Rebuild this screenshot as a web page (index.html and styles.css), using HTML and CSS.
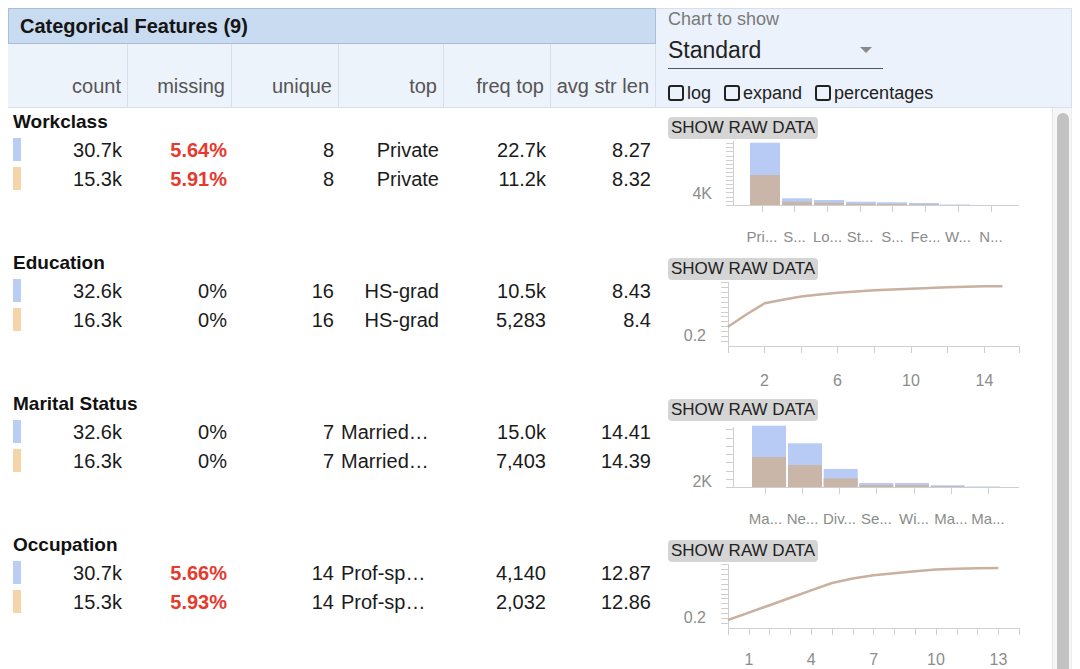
FILE: index.html
```html
<!DOCTYPE html>
<html>
<head>
<meta charset="utf-8">
<link rel="stylesheet" href="styles.css">
</head>
<body>
<div class="app">
  <div class="head">
    <div class="head-left">
      <div class="title">Categorical Features (9)</div>
      <div class="cols">
        <div>count</div><div>missing</div><div>unique</div><div>top</div><div>freq top</div><div>avg str len</div>
      </div>
    </div>
    <div class="controls">
      <div class="ctl-label">Chart to show</div>
      <div class="select"><span>Standard</span><span class="caret"></span></div>
      <div class="checks">
        <label class="check"><span class="cb"></span>log</label>
        <label class="check"><span class="cb"></span>expand</label>
        <label class="check"><span class="cb"></span>percentages</label>
      </div>
    </div>
  </div>

  <div class="main">
    <div class="features">

      <div class="feature">
        <div class="stats">
          <div class="fname">Workclass</div>
          <div class="row"><span class="first"><i class="sw a"></i>30.7k</span><span class="red">5.64%</span><span>8</span><span>Private</span><span>22.7k</span><span>8.27</span></div>
          <div class="row"><span class="first"><i class="sw b"></i>15.3k</span><span class="red">5.91%</span><span>8</span><span>Private</span><span>11.2k</span><span>8.32</span></div>
        </div>
        <div class="chart">
          <button class="raw">SHOW RAW DATA</button>
          <svg viewBox="0 0 396 110">
            <rect class="bl" x="94" y="3.7" width="30" height="62.3"/><rect class="br" x="94" y="36" width="30" height="30"/>
            <rect class="bl" x="126" y="59.3" width="30" height="6.7"/><rect class="br" x="126" y="62.7" width="30" height="3.3"/>
            <rect class="bl" x="158" y="61" width="30" height="5"/><rect class="br" x="158" y="63.7" width="30" height="2.3"/>
            <rect class="bl" x="190" y="62.7" width="30" height="3.3"/><rect class="br" x="190" y="64.7" width="30" height="1.3"/>
            <rect class="bl" x="221" y="63.3" width="30" height="2.7"/><rect class="br" x="221" y="65" width="30" height="1"/>
            <rect class="bl" x="253" y="64" width="30" height="2"/><rect class="br" x="253" y="65.4" width="30" height="0.6"/>
            <rect class="bl" x="284" y="65.5" width="30" height="0.5"/>
            <path class="ax" d="M77.5 2V66.5M70 66.5H363M70 62.5h7M70 58.5h7M70 53.5h7M70 49.5h7M70 45.5h7M70 41.5h7M70 37.5h7M70 33.5h7M70 29.5h7M70 25.5h7M70 21.5h7M70 17.5h7M70 12.5h7M70 8.5h7M70 4.5h7M106.5 66v7M138.5 66v7M171.5 66v7M204.5 66v7M236.5 66v7M269.5 66v7M302.5 66v7M335.5 66v7"/>
            <text class="yl" x="56" y="60">4K</text>
            <g class="xl">
              <text x="106" y="103">Pri...</text><text x="138.5" y="103">S...</text><text x="171.5" y="103">Lo...</text><text x="204" y="103">St...</text>
              <text x="236.5" y="103">S...</text><text x="269.5" y="103">Fe...</text><text x="302" y="103">W...</text><text x="335" y="103">N...</text>
            </g>
          </svg>
        </div>
      </div>

      <div class="feature">
        <div class="stats">
          <div class="fname">Education</div>
          <div class="row"><span class="first"><i class="sw a"></i>32.6k</span><span>0%</span><span>16</span><span>HS-grad</span><span>10.5k</span><span>8.43</span></div>
          <div class="row"><span class="first"><i class="sw b"></i>16.3k</span><span>0%</span><span>16</span><span>HS-grad</span><span>5,283</span><span>8.4</span></div>
        </div>
        <div class="chart">
          <button class="raw">SHOW RAW DATA</button>
          <svg viewBox="0 0 396 110">
            <path class="ax" d="M72.5 2V66.5M72 66.5H363.5M65 61.5h7M65 56.5h7M65 51.5h7M65 46.5h7M65 41.5h7M65 36.5h7M65 32.5h7M65 27.5h7M65 22.5h7M65 17.5h7M65 12.5h7M65 7.5h7M65 2.5h7M72.5 66v7M108.5 66v7M145.5 66v7M181.5 66v7M218.5 66v7M255.5 66v7M291.5 66v7M328.5 66v7M363.5 66v7"/>
            <polyline class="ln" points="72,46.7 90.3,34.5 108.6,23.3 126.9,19.8 145.2,16.6 163.5,14.5 181.8,12.7 200.1,11.4 218.4,10.3 236.7,9.5 255,8.7 273.3,8 291.6,7.3 309.9,6.8 328.2,6.3 346.5,6.2"/>
            <text class="yl" x="50" y="61">0.2</text>
            <g class="nl">
              <text x="108.5" y="106">2</text><text x="181.5" y="106">6</text><text x="255" y="106">10</text><text x="328.5" y="106">14</text>
            </g>
          </svg>
        </div>
      </div>

      <div class="feature">
        <div class="stats">
          <div class="fname">Marital Status</div>
          <div class="row"><span class="first"><i class="sw a"></i>32.6k</span><span>0%</span><span>7</span><span class="trunc">Married…</span><span>15.0k</span><span>14.41</span></div>
          <div class="row"><span class="first"><i class="sw b"></i>16.3k</span><span>0%</span><span>7</span><span class="trunc">Married…</span><span>7,403</span><span>14.39</span></div>
        </div>
        <div class="chart">
          <button class="raw">SHOW RAW DATA</button>
          <svg viewBox="0 0 396 110">
            <rect class="bl" x="96" y="4.7" width="34" height="61.3"/><rect class="br" x="96" y="36" width="34" height="30"/>
            <rect class="bl" x="132" y="22.3" width="34" height="43.7"/><rect class="br" x="132" y="44" width="34" height="22"/>
            <rect class="bl" x="167.7" y="48" width="34" height="18"/><rect class="br" x="167.7" y="57.3" width="34" height="8.7"/>
            <rect class="bl" x="203.3" y="62" width="34" height="4"/><rect class="br" x="203.3" y="64" width="34" height="2"/>
            <rect class="bl" x="239" y="62" width="34" height="4"/><rect class="br" x="239" y="64" width="34" height="2"/>
            <rect class="bl" x="274.7" y="64.3" width="34" height="1.7"/><rect class="br" x="274.7" y="65.3" width="34" height="0.7"/>
            <rect class="bl" x="310" y="65.5" width="34" height="0.5"/>
            <path class="ax" d="M77.5 6V66.5M70 66.5H363M70 58.5h7M70 50.5h7M70 41.5h7M70 33.5h7M70 25.5h7M70 17.5h7M70 8.5h7M109.5 66v7M146.5 66v7M183.5 66v7M220.5 66v7M258.5 66v7M295.5 66v7M332.5 66v7"/>
            <text class="yl" x="56" y="66">2K</text>
            <g class="xl">
              <text x="109.5" y="103">Ma...</text><text x="146.5" y="103">Ne...</text><text x="183.5" y="103">Div...</text><text x="220.5" y="103">Se...</text>
              <text x="258" y="103">Wi...</text><text x="295" y="103">Ma...</text><text x="332" y="103">Ma...</text>
            </g>
          </svg>
        </div>
      </div>

      <div class="feature">
        <div class="stats">
          <div class="fname">Occupation</div>
          <div class="row"><span class="first"><i class="sw a"></i>30.7k</span><span class="red">5.66%</span><span>14</span><span class="trunc">Prof-sp…</span><span>4,140</span><span>12.87</span></div>
          <div class="row"><span class="first"><i class="sw b"></i>15.3k</span><span class="red">5.93%</span><span>14</span><span class="trunc">Prof-sp…</span><span>2,032</span><span>12.86</span></div>
        </div>
        <div class="chart">
          <button class="raw">SHOW RAW DATA</button>
          <svg viewBox="0 0 396 110">
            <path class="ax" d="M72.5 2V66.5M72 66.5H363.5M65 61.5h7M65 56.5h7M65 51.5h7M65 46.5h7M65 41.5h7M65 36.5h7M65 32.5h7M65 27.5h7M65 22.5h7M65 17.5h7M65 12.5h7M65 7.5h7M65 2.5h7M72.5 66v7M93.5 66v7M113.5 66v7M134.5 66v7M155.5 66v7M176.5 66v7M197.5 66v7M217.5 66v7M238.5 66v7M259.5 66v7M280.5 66v7M301.5 66v7M321.5 66v7M342.5 66v7M363.5 66v7"/>
            <polyline class="ln" points="72,58 92.8,50.6 113.6,43.2 134.4,35.8 155.2,28.4 176,21 196.8,16.5 217.6,13.3 238.4,11.2 259.2,9.2 280,7.6 300.8,6.7 321.6,6.2 342.4,6.1"/>
            <text class="yl" x="50" y="60.5">0.2</text>
            <g class="nl">
              <text x="93" y="103">1</text><text x="155.2" y="103">4</text><text x="217.6" y="103">7</text><text x="280" y="103">10</text><text x="342.4" y="103">13</text>
            </g>
          </svg>
        </div>
      </div>

    </div>
    <div class="scroll"><div class="thumb"></div></div>
  </div>
</div>
</body>
</html>
```

FILE: styles.css
```css
* { box-sizing: border-box; }
html { overflow: hidden; }
body {
  margin: 8px;
  font-family: "Liberation Sans", Arial, sans-serif;
  color: #1b1b1b;
  background: #fff;
}
.app { width: 1064px; }

.head { display: flex; height: 100px; }
.head-left { width: 648px; display: flex; flex-direction: column; }
.title {
  height: 36px;
  border: 1px solid #a9bdd6;
  background: #c8dbf0;
  padding-left: 11px;
  font-size: 20px;
  font-weight: bold;
  line-height: 34px;
  color: #151515;
}
.cols {
  display: grid;
  grid-template-columns: 120px 104px 107px 105px 107px 105px;
  height: 64px;
  background: #edf3fb;
  border-bottom: 1px solid #d6dfeb;
}
.cols div {
  border-right: 1px solid #d6dfeb;
  display: flex;
  align-items: flex-end;
  justify-content: flex-end;
  padding: 0 6px 9px 0;
  font-size: 20px;
  line-height: 24px;
  color: #555;
}

.controls {
  width: 416px;
  height: 100px;
  background: #ebf2fb;
  border: 1px solid #d5e0ec;
  border-left: none;
  padding-left: 12px;
}
.ctl-label { font-size: 18px; line-height: 20px; color: #7a7a7a; }
.select {
  width: 215px;
  height: 40px;
  padding: 3px 11px 0 0;
  border-bottom: 1px solid #555;
  display: flex;
  align-items: center;
  justify-content: space-between;
  font-size: 23px;
  color: #222;
}
.caret {
  width: 0; height: 0;
  border-left: 6px solid transparent;
  border-right: 6px solid transparent;
  border-top: 6px solid #8a8a8a;
}
.checks {
  display: flex;
  align-items: center;
  height: 26px;
  margin-top: 11px;
  font-size: 18px;
  color: #222;
}
.check { display: flex; align-items: center; margin-right: 13px; }
.cb {
  width: 16px; height: 16px;
  border: 2px solid #222;
  border-radius: 3px;
  margin-right: 3px;
}

.main { display: flex; height: 561px; overflow: hidden; }
.features { width: 1044px; }
.feature { display: flex; height: 141px; }
.stats { width: 648px; padding-top: 3px; }
.fname {
  padding-left: 5px;
  font-size: 19px;
  font-weight: bold;
  line-height: 22px;
  height: 22px;
  margin-bottom: 3px;
  color: #111;
}
.row {
  display: grid;
  grid-template-columns: 120px 104px 107px 105px 107px 105px;
  height: 29px;
  line-height: 29px;
  font-size: 20px;
}
.row > span {
  text-align: right;
  padding-right: 5px;
  white-space: nowrap;
  overflow: hidden;
}
.row > .first {
  display: flex;
  justify-content: space-between;
  padding-left: 5px;
  padding-right: 6px;
}
.sw { width: 8px; height: 23px; margin-top: 2px; }
.sw.a { background: #b9cdf5; }
.sw.b { background: #f5d4aa; }
.red { color: #e63a2e; font-weight: bold; }
.row > .trunc { text-align: left; padding-left: 2px; }

.chart { width: 396px; }
.raw {
  display: block;
  margin: 9px 0 0 12px;
  height: 22px;
  padding: 0 3px;
  border: none;
  border-radius: 4px;
  background: #d5d5d5;
  font-family: "Liberation Sans", Arial, sans-serif;
  font-size: 17px;
  line-height: 22px;
  color: #222;
}
.chart svg { display: block; width: 396px; height: 110px; }
.ax { stroke: #cfcfcf; stroke-width: 1; fill: none; }
.bl { fill: #b7cbf5; }
.br { fill: #c9b6a8; }
.ln { fill: none; stroke: #c9b09f; stroke-width: 2.5; stroke-linejoin: round; }
.yl { font-size: 16px; fill: #8c8c8c; text-anchor: end; }
.xl text { font-size: 15px; fill: #8c8c8c; text-anchor: middle; }
.nl text { font-size: 16px; fill: #8c8c8c; text-anchor: middle; }

.scroll {
  width: 20px;
  border-left: 1px solid #e6e6e6;
  border-right: 1px solid #ececec;
  background: #f6f6f6;
  padding: 5px 2px 0 4px;
}
.thumb { height: 100%; background: #c2c2c2; border-radius: 6px 6px 0 0; }
```
